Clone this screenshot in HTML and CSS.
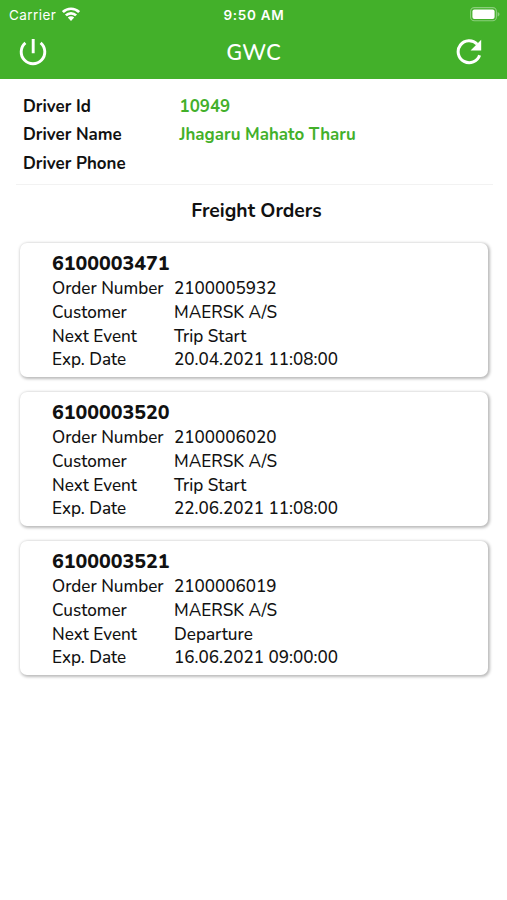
FILE: index.html
```
<!DOCTYPE html>
<html lang="en">
<head>
<meta charset="utf-8">
<title>GWC</title>
<link rel="stylesheet" href="styles.css">
</head>
<body>
<header class="header">
  <div class="status">
    <div class="carrier"><span>Carrier</span>
      <svg class="wifi" viewBox="0 0 18 14" width="18" height="14"><g fill="none" stroke="#fff" stroke-width="2.7"><path d="M.9 5.1a11.5 11.5 0 0 1 16.2 0"/><path d="M3.9 8.4a7.2 7.2 0 0 1 10.2 0"/></g><path fill="#fff" d="M5.8 10.6a4.5 4.5 0 0 1 6.4 0L9 13.9z"/></svg>
    </div>
    <div class="time">9:50 AM</div>
    <svg class="battery" viewBox="0 0 30 15" width="30" height="15"><rect x=".6" y=".6" width="25.8" height="13.2" rx="3.8" fill="none" stroke="#8bce7c" stroke-width="1.1"/><rect x="2.4" y="2.4" width="22.2" height="9.6" rx="2" fill="#fff"/><path fill="#8bce7c" d="M27.6 4.9c2.5.9 2.5 3.7 0 4.6z"/></svg>
  </div>
  <div class="toolbar">
    <svg class="power" viewBox="0 0 28 28" width="28" height="28"><path d="M6.4 4.9a11.8 11.8 0 1 0 15.2 0M14.2 1v14.2" fill="none" stroke="#fff" stroke-width="2.9"/></svg>
    <h1 class="title">GWC</h1>
    <svg class="refresh" viewBox="0 0 26 26" width="26" height="26"><path d="M21.2 5.2A11 11 0 1 0 23.6 16.2" fill="none" stroke="#fff" stroke-width="3"/><path d="M25.2.8v10.7H14.6z" fill="#fff"/></svg>
  </div>
</header>
<main class="content">
  <dl class="driver">
    <dt>Driver Id</dt><dd>10949</dd>
    <dt>Driver Name</dt><dd>Jhagaru Mahato Tharu</dd>
    <dt>Driver Phone</dt><dd></dd>
  </dl>
  <h2 class="heading">Freight Orders</h2>
  <section class="orders">
    <article class="card">
      <h3>6100003471</h3>
      <dl class="details">
        <dt>Order Number</dt><dd>2100005932</dd>
        <dt>Customer</dt><dd>MAERSK A/S</dd>
        <dt>Next Event</dt><dd>Trip Start</dd>
        <dt>Exp. Date</dt><dd>20.04.2021 11:08:00</dd>
      </dl>
    </article>
    <article class="card">
      <h3>6100003520</h3>
      <dl class="details">
        <dt>Order Number</dt><dd>2100006020</dd>
        <dt>Customer</dt><dd>MAERSK A/S</dd>
        <dt>Next Event</dt><dd>Trip Start</dd>
        <dt>Exp. Date</dt><dd>22.06.2021 11:08:00</dd>
      </dl>
    </article>
    <article class="card">
      <h3>6100003521</h3>
      <dl class="details">
        <dt>Order Number</dt><dd>2100006019</dd>
        <dt>Customer</dt><dd>MAERSK A/S</dd>
        <dt>Next Event</dt><dd>Departure</dd>
        <dt>Exp. Date</dt><dd>16.06.2021 09:00:00</dd>
      </dl>
    </article>
  </section>
</main>
</body>
</html>
```
FILE: styles.css
```
* { box-sizing: border-box; margin: 0; padding: 0; }
body {
  min-height: 900px;
  background: #fff;
  color: #111;
  font-family: Nunito, "Noto Sans", sans-serif;
  white-space: nowrap;
}
svg { display: block; }
.header { height: 79px; background: #43b02a; color: #fff; }
.status {
  display: grid;
  grid-template-columns: 1fr auto 1fr;
  align-items: center;
  height: 26px;
  padding: 0 7px 0 9px;
  font: 400 13.5px/26px Inter, sans-serif;
}
.carrier { display: flex; align-items: center; gap: 6px; letter-spacing: .45px; }
.carrier span { padding-top: 2px; }
.time { font-weight: 600; letter-spacing: .7px; padding: 2px 1px 0 0; }
.battery { justify-self: end; }
.toolbar {
  display: grid;
  grid-template-columns: 1fr auto 1fr;
  align-items: center;
  height: 52px;
  padding: 0 25px 0 19px;
}
.title { padding: 2px 0 0 6px; font-size: 22px; font-weight: 600; line-height: 30px; }
.refresh { justify-self: end; }
.content { padding: 12px 14px 0 16px; }
.driver {
  display: grid;
  grid-template-columns: 156.5px 1fr;
  grid-auto-rows: 28.5px;
  height: 94px;
  padding: 1.5px 0 0 7px;
  border-bottom: 1px solid #f2f2f2;
  font-size: 16.9px;
  line-height: 28px;
  font-weight: 700;
}
.driver dd { color: #43b02a; }
.heading {
  margin-top: 11px;
  padding-left: 4px;
  text-align: center;
  font-size: 19.3px;
  line-height: 30px;
  font-weight: 700;
}
.orders { display: grid; gap: 15px; margin: 17px 5px 0 4px; }
.card {
  height: 134px;
  padding: 8px 32px;
  border-radius: 7px;
  background: #fff;
  box-shadow: 1px 1px 3px 1px rgba(0, 0, 0, .27);
}
.card h3 { font-size: 19.6px; line-height: 26px; font-weight: 800; }
.details {
  display: grid;
  grid-template-columns: 122px 1fr;
  grid-auto-rows: 23.7px;
  padding-top: .4px;
  font-size: 17.1px;
  font-weight: 500;
  line-height: 24px;
}
```
